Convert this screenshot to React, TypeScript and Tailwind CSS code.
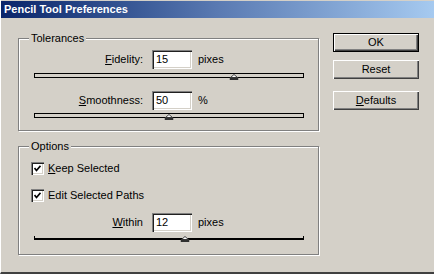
import React from 'react'

const FONT = { fontFamily: '"Liberation Sans", Arial, sans-serif' }

function Thumb({ pos }: { pos: number }) {
  return (
    <svg
      width="9"
      height="6"
      viewBox="0 0 9 6"
      className="absolute top-0 -translate-x-1/2"
      style={{ left: `${pos}%` }}
    >
      <polygon points="4.5,0.5 8,3.5 1,3.5" fill="#ffffff" stroke="#404040" strokeWidth="1" />
      <rect x="0" y="3.5" width="9" height="2.5" fill="#303030" />
    </svg>
  )
}

function Slider({ pos, open }: { pos: number; open?: boolean }) {
  return (
    <div
      className={
        open
          ? 'relative ml-[15px] w-[270px] h-[4px] border-x border-b-2 border-black'
          : 'relative ml-[15px] w-[270px] h-[5px] border border-black'
      }
    >
      <Thumb pos={pos} />
    </div>
  )
}

function Field({ value }: { value: string }) {
  return (
    <div className="w-[40px] h-[19px] bg-white flex items-center pl-[4px] text-[11px] text-black shadow-[inset_1px_1px_0_#808080,inset_2px_2px_0_#202020,inset_-1px_-1px_0_#ffffff,inset_-2px_-2px_0_#d4d0c8]">
      {value}
    </div>
  )
}

function Row({ label, value, unit, className }: { label: React.ReactNode; value: string; unit: string; className: string }) {
  return (
    <div className={`flex items-center h-[19px] ${className}`}>
      <div className="w-[124px] text-right text-[11px] text-black">{label}</div>
      <div className="ml-[9px]">
        <Field value={value} />
      </div>
      <span className="ml-[6px] text-[11px] text-black">{unit}</span>
    </div>
  )
}

function Check({ label, className }: { label: React.ReactNode; className: string }) {
  return (
    <div className={`flex items-center h-[13px] ml-[12px] ${className}`}>
      <div className="w-[13px] h-[13px] bg-white flex items-center justify-center shadow-[inset_1px_1px_0_#808080,inset_2px_2px_0_#202020,inset_-1px_-1px_0_#ffffff,inset_-2px_-2px_0_#d4d0c8]">
        <svg width="7" height="7" viewBox="0 0 7 7">
          <path d="M0.5 3 L2.5 5.5 L6.5 0.8" fill="none" stroke="#000" strokeWidth="1.7" />
        </svg>
      </div>
      <span className="ml-[4px] text-[11px] text-black">{label}</span>
    </div>
  )
}

function Group({ title, className, children }: { title: string; className: string; children: React.ReactNode }) {
  return (
    <div className={`relative border border-[#808080] shadow-[inset_1px_1px_0_#ffffff,1px_1px_0_#ffffff] ${className}`}>
      <span className="absolute -top-[7px] left-[10px] px-[2px] bg-[#d4d0c8] leading-[13px] text-[11px] text-black">
        {title}
      </span>
      {children}
    </div>
  )
}

function Button({ children, def, className }: { children: React.ReactNode; def?: boolean; className: string }) {
  return (
    <div
      className={`w-[86px] h-[19px] flex items-center justify-center text-[11px] text-black bg-[#d4d0c8] ${
        def
          ? 'border border-black shadow-[inset_1px_1px_0_#ffffff,inset_-1px_-1px_0_#404040,inset_-2px_-2px_0_#808080]'
          : 'shadow-[inset_1px_1px_0_#ffffff,inset_-1px_-1px_0_#404040,inset_-2px_-2px_0_#808080]'
      } ${className}`}
    >
      {children}
    </div>
  )
}

export default function App() {
  return (
    <div
      className="w-[434px] h-[274px] bg-[#d4d0c8] flex flex-col border-l border-l-white border-b-2 border-b-[#404040] overflow-hidden"
      style={FONT}
    >
      <div className="mt-px h-[17px] flex items-center pl-[3px] bg-gradient-to-r from-[#0a246a] via-[#5a7ab2] to-[#a6caf0]">
        <span className="text-[11px] font-bold text-white">Pencil Tool Preferences</span>
      </div>
      <div className="flex">
        <div className="ml-[17px] w-[301px] flex flex-col">
          <Group title="Tolerances" className="mt-[20px] h-[93px]">
            <Row
              className="mt-[11px]"
              label={<><u>F</u>idelity:</>}
              value="15"
              unit="pixes"
            />
            <div className="mt-[4px]">
              <Slider pos={74.4} />
            </div>
            <Row
              className="mt-[13px]"
              label={<><u>S</u>moothness:</>}
              value="50"
              unit="%"
            />
            <div className="mt-[3px]">
              <Slider pos={50} />
            </div>
          </Group>
          <Group title="Options" className="mt-[15px] h-[109px]">
            <Check className="mt-[15px]" label={<><u>K</u>eep Selected</>} />
            <Check className="mt-[14px]" label="Edit Selected Paths" />
            <Row
              className="mt-[11px]"
              label={<><u>W</u>ithin</>}
              value="12"
              unit="pixes"
            />
            <div className="mt-[4px]">
              <Slider pos={56} open />
            </div>
          </Group>
        </div>
        <div className="ml-[14px] flex flex-col">
          <Button def className="mt-[15px]">OK</Button>
          <Button className="mt-[8px]">Reset</Button>
          <Button className="mt-[12px]">
            <span><u>D</u>efaults</span>
          </Button>
        </div>
      </div>
    </div>
  )
}
